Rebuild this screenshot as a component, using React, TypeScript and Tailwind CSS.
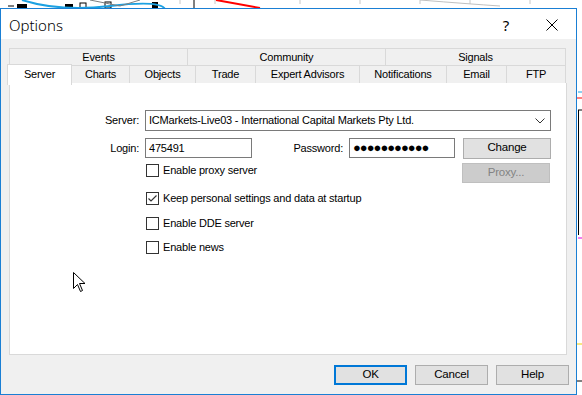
import React from 'react';

const font = { fontFamily: '"Liberation Sans", Arial, sans-serif' };

const topTabs = [
  { label: 'Events', w: 'w-[179px]' },
  { label: 'Community', w: 'w-[198px]' },
  { label: 'Signals', w: 'w-[180px]' },
];

const bottomTabs = [
  { label: 'Charts', w: 'w-[58px]' },
  { label: 'Objects', w: 'w-[66px]' },
  { label: 'Trade', w: 'w-[60px]' },
  { label: 'Expert Advisors', w: 'w-[104px]' },
  { label: 'Notifications', w: 'w-[87px]' },
  { label: 'Email', w: 'w-[60px]' },
  { label: 'FTP', w: 'w-[59px]' },
];

function Checkbox({ label, checked = false, className = '' }: { label: string; checked?: boolean; className?: string }) {
  return (
    <label className={`flex items-center h-[13px] gap-[4px] ${className}`}>
      <span className="w-[13px] h-[13px] border border-[#333333] bg-white flex items-center justify-center">
        {checked && (
          <svg width="11" height="11" viewBox="0 0 11 11">
            <path d="M1.5 5.5 L4 8 L9.5 2.5" fill="none" stroke="#333" strokeWidth="1.2" />
          </svg>
        )}
      </span>
      <span>{label}</span>
    </label>
  );
}

function Background() {
  return (
    <svg className="absolute inset-0" width="582" height="395" viewBox="0 0 582 395">
      <rect width="582" height="395" fill="#ffffff" />
      {[180, 215, 300, 360, 420, 470, 530].map((x) => (
        <line key={x} x1={x} y1="0" x2={x} y2="4" stroke="#c8c8c8" />
      ))}
      <line x1="194" y1="0" x2="194" y2="9" stroke="#000" />
      <path d="M8 6 L14 6" stroke="#000" />
      <rect x="17" y="4" width="10" height="4" fill="#000" />
      <rect x="65" y="4" width="8" height="4" fill="#000" />
      <rect x="152" y="2" width="6" height="6" fill="#000" />
      <rect x="105" y="2" width="6" height="6" fill="#fff" stroke="#000" />
      <rect x="80" y="3" width="6" height="5" fill="#fff" stroke="#000" />
      <path d="M22 0 Q60 12 110 6 T165 9" stroke="#1ba1e2" strokeWidth="2" fill="none" />
      <path d="M90 0 L120 6 L140 0" stroke="#7f7f7f" fill="none" />
      <path d="M216 0 L260 8" stroke="#ff0000" strokeWidth="2" />
      <path d="M420 0 Q470 4 500 6" stroke="#c0c0c0" fill="none" />
      <path d="M577 98 L582 98" stroke="#ff0000" />
      <path d="M578 92 L582 92" stroke="#1ba1e2" />
      <path d="M578 110 L582 110 M578.5 110 L578.5 235" stroke="#000" />
      <path d="M578 238 L582 238" stroke="#e000e0" />
      <path d="M577 344 L582 344" stroke="#f0d000" />
      <path d="M577 381 L582 381" stroke="#000" />
    </svg>
  );
}

export default function App() {
  return (
    <div className="relative w-[582px] h-[395px] overflow-hidden text-[11px] tracking-[-0.2px] text-black" style={font}>
      <Background />
      <div className="relative pt-[8px]">
        <div className="w-[577px] h-[387px] border border-[#1a7fd4] bg-[#f0f0f0] flex flex-col">
          {/* Title bar */}
          <div className="h-[30px] bg-white flex items-center pl-[8px] pt-[2px] tracking-normal">
            <span className="text-[15px] text-[#000] grow font-light" style={{ fontFamily: '"Noto Sans", "Open Sans", sans-serif' }}>
              Options
            </span>
            <span className="w-[46px] text-center text-[15px]" style={{ fontFamily: '"Noto Sans", sans-serif' }}>?</span>
            <span className="w-[46px] flex justify-center mr-[1px]">
              <svg width="12" height="12" viewBox="0 0 12 12">
                <path d="M0.5 0.5 L11.5 11.5 M11.5 0.5 L0.5 11.5" stroke="#000" strokeWidth="1" />
              </svg>
            </span>
          </div>

          {/* Tabs + panel */}
          <div className="pl-[8px] pt-[9px] flex flex-col">
            <div className="flex h-[18px]">
              {topTabs.map((t, i) => (
                <div
                  key={t.label}
                  className={`${t.w} h-[18px] border-t border-b border-r border-[#d9d9d9] flex items-center justify-center ${i === 0 ? 'border-l' : ''}`}
                >
                  {t.label}
                </div>
              ))}
            </div>
            <div className="flex h-[18px] relative">
              <div className="w-[65px] h-[21px] -mt-[2px] -ml-[2px] bg-white border-l border-t border-r border-[#d9d9d9] flex items-center justify-center relative z-10 pb-[2px]">
                Server
              </div>
              {bottomTabs.map((t) => (
                <div
                  key={t.label}
                  className={`${t.w} h-[18px] border-b border-r border-[#d9d9d9] flex items-center justify-center`}
                >
                  {t.label}
                </div>
              ))}
            </div>
            <div className="relative w-[558px] h-[272px] bg-white border-l border-r border-b border-[#d9d9d9] -mt-[1px]">
              <div className="pt-[27px] flex flex-col">
                <div className="flex items-center h-[21px]">
                  <span className="w-[129px] text-right">Server:</span>
                  <div className="ml-[6px] w-[406px] h-[21px] border border-[#7a7a7a] bg-white flex items-center pl-[3px] pr-[5px]">
                    <span className="grow">ICMarkets-Live03 - International Capital Markets Pty Ltd.</span>
                    <svg width="10" height="6" viewBox="0 0 10 6">
                      <path d="M0.5 0.5 L5 5 L9.5 0.5" fill="none" stroke="#333" />
                    </svg>
                  </div>
                </div>
                <div className="flex items-center h-[20px] mt-[7px]">
                  <span className="w-[129px] text-right">Login:</span>
                  <div className="ml-[6px] w-[107px] h-[20px] border border-[#7a7a7a] bg-white flex items-center pl-[3px]">
                    475491
                  </div>
                  <span className="w-[91px] text-right">Password:</span>
                  <div className="ml-[6px] w-[106px] h-[20px] border border-[#7a7a7a] bg-white flex items-center pl-[3px] text-[13px] tracking-[-1px]">
                    ●●●●●●●●●●●
                  </div>
                  <button className="ml-[8px] w-[88px] h-[21px] border border-[#adadad] bg-[#e1e1e1] flex items-center justify-center text-[11.5px]">
                    Change
                  </button>
                </div>
                <div className="flex mt-[5px]">
                  <div className="ml-[136px] w-[316px] flex flex-col pt-[1px]">
                    <Checkbox label="Enable proxy server" />
                    <Checkbox label="Keep personal settings and data at startup" checked className="mt-[15px]" />
                    <Checkbox label="Enable DDE server" className="mt-[12px]" />
                    <Checkbox label="Enable news" className="mt-[11px]" />
                  </div>
                  <button className="w-[88px] h-[20px] border border-[#bfbfbf] bg-[#cccccc] text-[#838383] flex items-center justify-center text-[11.5px]">
                    Proxy...
                  </button>
                </div>
              </div>
              {/* mouse pointer */}
              <svg className="absolute left-[63px] top-[189px]" width="14" height="22" viewBox="0 0 14 22">
                <path
                  d="M0.5 0.5 L0.5 16.5 L4.5 12.5 L7.5 19.5 L9.5 18.5 L6.5 11.5 L12 11.5 Z"
                  fill="#fff"
                  stroke="#000"
                />
              </svg>
            </div>
          </div>

          {/* Dialog buttons */}
          <div className="flex justify-end gap-[8px] pr-[7px] mt-[10px]">
            <button className="w-[73px] h-[20px] border-2 border-[#0078d7] bg-[#e1e1e1] flex items-center justify-center text-[11.5px]">
              OK
            </button>
            <button className="w-[73px] h-[20px] border border-[#adadad] bg-[#e1e1e1] flex items-center justify-center text-[11.5px]">
              Cancel
            </button>
            <button className="w-[73px] h-[20px] border border-[#adadad] bg-[#e1e1e1] flex items-center justify-center text-[11.5px]">
              Help
            </button>
          </div>
        </div>
      </div>
    </div>
  );
}
